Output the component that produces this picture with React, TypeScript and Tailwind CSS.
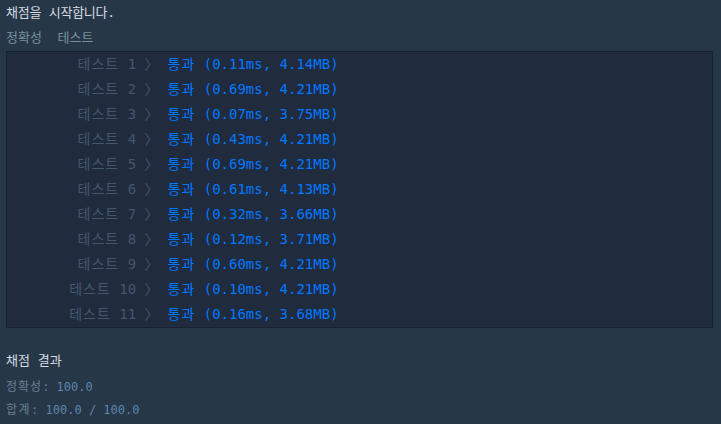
const results = [
  { id: 1, time: "0.11ms", mem: "4.14MB" },
  { id: 2, time: "0.69ms", mem: "4.21MB" },
  { id: 3, time: "0.07ms", mem: "3.75MB" },
  { id: 4, time: "0.43ms", mem: "4.21MB" },
  { id: 5, time: "0.69ms", mem: "4.21MB" },
  { id: 6, time: "0.61ms", mem: "4.13MB" },
  { id: 7, time: "0.32ms", mem: "3.66MB" },
  { id: 8, time: "0.12ms", mem: "3.71MB" },
  { id: 9, time: "0.60ms", mem: "4.21MB" },
  { id: 10, time: "0.10ms", mem: "4.21MB" },
  { id: 11, time: "0.16ms", mem: "3.68MB" },
];

const mono = {
  fontFamily: '"DejaVu Sans Mono", "Noto Sans CJK KR", monospace',
};

export default function App() {
  return (
    <div
      className="w-[721px] h-[424px] bg-[#263747] overflow-hidden text-[13px]"
      style={mono}
    >
      <div className="pl-[6px] pr-[8px]">
        <p className="leading-[25px] text-[#d5dbe1] tracking-[-0.25px]">채점을 시작합니다.</p>
        <p className="leading-[25px] text-[#78909c]">정확성&nbsp;&nbsp;테스트</p>

        {/* results panel */}
        <table className="mt-[1px] w-[707px] bg-[#202b3d] border border-[#172231] text-[14px]">
          <tbody>
            {results.map(({ id, time, mem }) => (
              <tr key={id} className="h-[25px]">
                <td className="w-[152px] text-right whitespace-pre text-[#44576c] p-0 leading-[25px]">
                  <span className="tracking-[1px]">테스트</span> {id} 〉
                </td>
                <td className="pl-[9px] text-[#0078ff] whitespace-pre p-0 leading-[25px]">
                  <span className="tracking-[1px]">통과</span> ({time}, {mem})
                </td>
              </tr>
            ))}
          </tbody>
        </table>

        <div className="mt-[20px]">
          <p className="leading-[25px] text-[#d5dbe1]">채점 결과</p>
          <p className="leading-[28px] text-[12px] text-[#6b7f93]">
            <span className="tracking-[1px]">정확성</span>: <span className="text-[#5f84ad]">100.0</span>
          </p>
          <p className="leading-[18px] text-[12px] text-[#6b7f93]">
            <span className="tracking-[1.5px]">합계</span>: <span className="text-[#5f84ad]">100.0 / 100.0</span>
          </p>
        </div>
      </div>
    </div>
  );
}
